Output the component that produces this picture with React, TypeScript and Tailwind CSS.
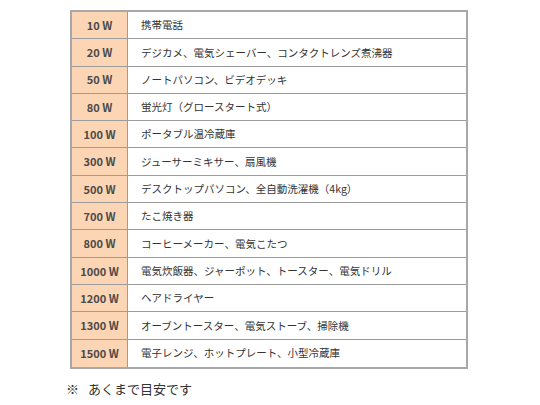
const rows = [
  ["10 W", "携帯電話"],
  ["20 W", "デジカメ、電気シェーバー、コンタクトレンズ煮沸器"],
  ["50 W", "ノートパソコン、ビデオデッキ"],
  ["80 W", "蛍光灯（グロースタート式）"],
  ["100 W", "ポータブル温冷蔵庫"],
  ["300 W", "ジューサーミキサー、扇風機"],
  ["500 W", "デスクトップパソコン、全自動洗濯機（4kg）"],
  ["700 W", "たこ焼き器"],
  ["800 W", "コーヒーメーカー、電気こたつ"],
  ["1000 W", "電気炊飯器、ジャーポット、トースター、電気ドリル"],
  ["1200 W", "ヘアドライヤー"],
  ["1300 W", "オーブントースター、電気ストーブ、掃除機"],
  ["1500 W", "電子レンジ、ホットプレート、小型冷蔵庫"],
];

export default function App() {
  return (
    <div
      className="w-[540px] h-[405px] bg-white text-[#333] pt-[10px] pl-[70px]"
      style={{ fontFamily: '"Noto Sans CJK JP", "Noto Sans", sans-serif' }}
    >
      <div className="w-[398px] border-2 border-[#a8a8a8]">
        {rows.map(([w, d], i) => (
          <div
            key={w}
            className={`flex h-[27.3px] ${i < rows.length - 1 ? "border-b border-[#9c9c9c]" : ""}`}
          >
            <div className="w-[56px] shrink-0 bg-[#fcd5b4] border-r border-[#9c9c9c] flex items-center justify-center text-[11px] font-bold text-[#4a4a4a]">
              {w}
            </div>
            <div className="flex-1 flex items-center pl-[13px] text-[10.5px] text-[#333]">
              {d}
            </div>
          </div>
        ))}
      </div>
      <div className="flex items-center mt-[10px] -ml-[4px] text-[13px] text-[#333]">
        <span className="w-[22px]">※</span>
        <span>あくまで目安です</span>
      </div>
    </div>
  );
}
